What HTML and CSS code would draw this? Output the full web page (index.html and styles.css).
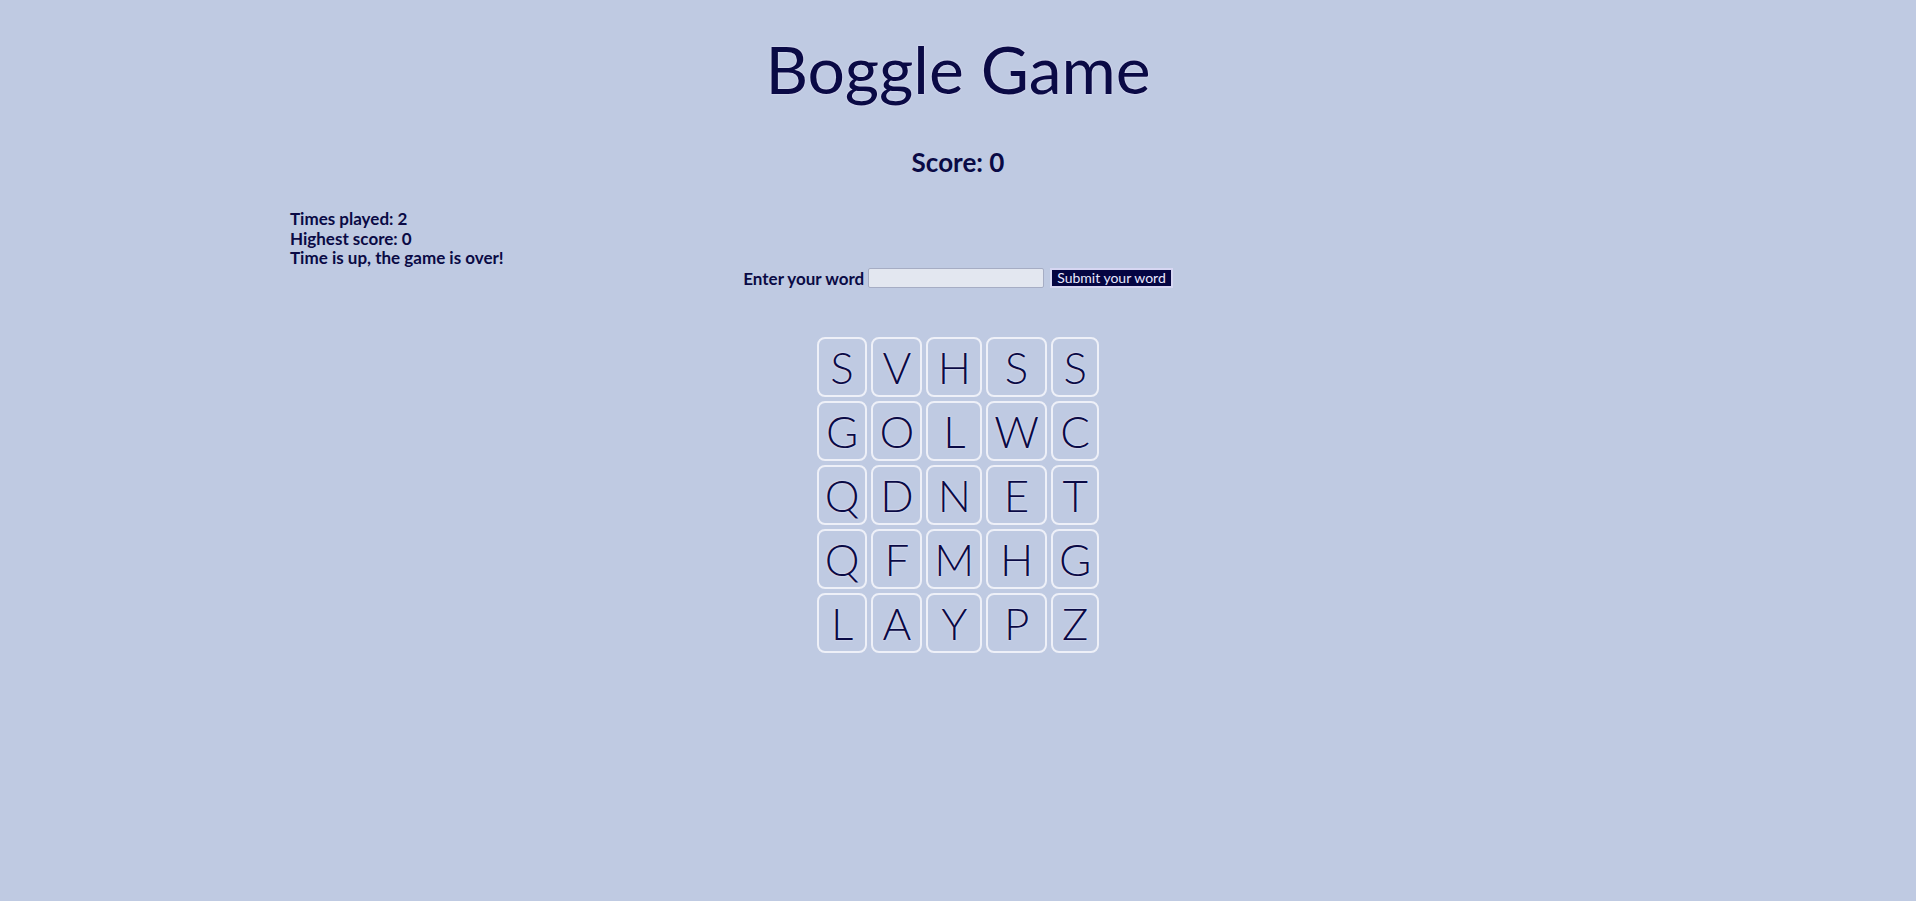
FILE: index.html
```html
<!DOCTYPE html>
<html>
<head>
<meta charset="utf-8">
<title>Boggle Game</title>
<link rel="stylesheet" href="styles.css">
</head>
<body>
<div class="page">
  <h1 class="title">Boggle Game</h1>
  <h2 class="score">Score: 0</h2>
  <div class="stats">
    <div>Times played: 2</div>
    <div>Highest score: 0</div>
    <div>Time is up, the game is over!</div>
  </div>
  <form class="word-form">
    <label class="word-label" for="word">Enter your word</label>
    <input class="word-input" id="word" type="text">
    <button class="word-button" type="button">Submit your word</button>
  </form>
  <table class="board">
    <tr><td>S</td><td>V</td><td>H</td><td>S</td><td>S</td></tr>
    <tr><td>G</td><td>O</td><td>L</td><td>W</td><td>C</td></tr>
    <tr><td>Q</td><td>D</td><td>N</td><td>E</td><td>T</td></tr>
    <tr><td>Q</td><td>F</td><td>M</td><td>H</td><td>G</td></tr>
    <tr><td>L</td><td>A</td><td>Y</td><td>P</td><td>Z</td></tr>
  </table>
</div>
</body>
</html>
```
FILE: styles.css
```css
html, body {
  background: #bfcae2;
}
body {
  margin: 8px;
  color: #0a0a45;
  font-family: "Trebuchet MS", "Lato", "Open Sans", sans-serif;
}
.page {
  display: flex;
  flex-direction: column;
}
.title {
  margin: 22px 0 0;
  text-align: center;
  font-size: 66px;
  font-weight: normal;
  line-height: 78px;
  text-shadow: 0 0 2px #e4e2f8, 0 0 1px #e4e2f8;
}
.score {
  margin: 39px 0 0;
  text-align: center;
  font-size: 26px;
  line-height: 30px;
  font-weight: bold;
}
.stats {
  margin: 32px 0 0;
  padding-left: 282px;
  font-size: 17px;
  font-weight: bold;
  line-height: 19.5px;
}
.word-form {
  margin: 0;
  display: flex;
  justify-content: center;
  align-items: center;
  gap: 4px;
}
.word-label {
  font-size: 17px;
  font-weight: bold;
}
.word-input {
  width: 172px;
  height: 16px;
  padding: 1px;
  border: 1px solid #a6adc4;
  border-radius: 2px;
  background: #e3e7f0;
  margin: 0 2px 0 0;
}
.word-button {
  height: 20px;
  padding: 0 5px;
  border: 2px solid #d6d6f2;
  background: #050542;
  color: #e8e8ff;
  font-family: "Trebuchet MS", "Lato", "Open Sans", sans-serif;
  font-size: 14px;
  line-height: 16px;
}
.board {
  margin: 44px auto 0;
  border-spacing: 4px;
}
.board td {
  height: 56px;
  padding: 0 6px;
  border: 2px solid #eef0f8;
  border-radius: 8px;
  text-align: center;
  vertical-align: middle;
  font-family: "Lato", sans-serif;
  font-weight: 300;
  font-size: 44px;
  line-height: 56px;
  color: #0a0a45;
  text-shadow: 0 0 2px #e4e2f8, 0 0 1px #e4e2f8;
}
```
